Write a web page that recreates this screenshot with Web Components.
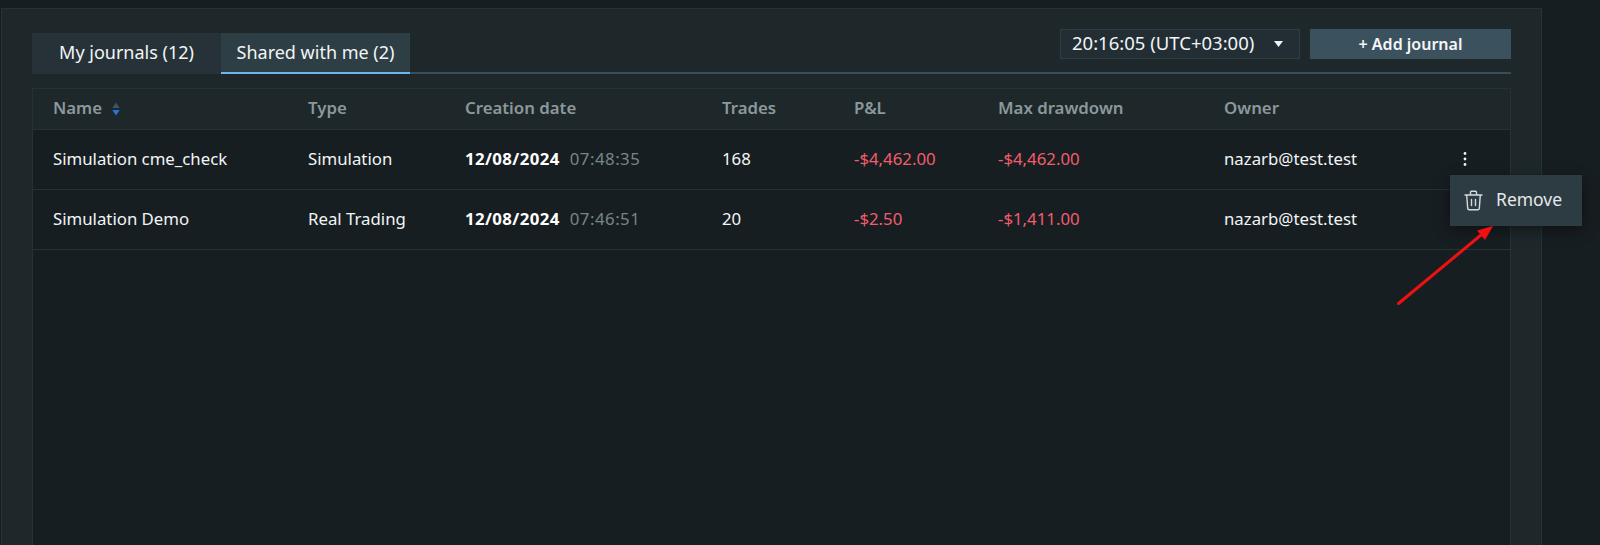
<!DOCTYPE html>
<html>
<head>
<meta charset="utf-8">
<title>Journals</title>
<style>
    html, body {
        margin: 0;
        height: 545px;
        overflow: hidden;
        background: #171e21;
        color: #fff;
        font-family: "Noto Sans", sans-serif;
    }
</style>
</head>
<body>
<journal-page>
    <journal-tab slot="tabs">My journals (12)</journal-tab>
    <journal-tab slot="tabs" active>Shared with me (2)</journal-tab>
    <time-select slot="tools">20:16:05 (UTC+03:00)</time-select>
    <add-button slot="tools">+ Add journal</add-button>
    <journal-table>
        <journal-row name="Simulation cme_check" type="Simulation" date="12/08/2024" time="07:48:35" trades="168" pnl="-$4,462.00" drawdown="-$4,462.00" owner="nazarb@test.test"></journal-row>
        <journal-row name="Simulation Demo" type="Real Trading" date="12/08/2024" time="07:46:51" trades="20" pnl="-$2.50" drawdown="-$1,411.00" owner="nazarb@test.test"></journal-row>
    </journal-table>
    <row-menu slot="overlay"></row-menu>
</journal-page>

<script>
class JournalPage extends HTMLElement {
    constructor() {
        super();
        this.attachShadow({ mode: 'open' });
    }

    connectedCallback() {
        this.shadowRoot.innerHTML = `
            <style>
                :host {
                    display: block;
                    position: relative;
                    box-sizing: border-box;
                    padding: 8px 0 0 1px;
                    height: 545px;
                    overflow: hidden;
                }

                .panel {
                    width: 1541px;
                    height: 537px;
                    box-sizing: border-box;
                    padding: 24px 30px 0 30px;
                    background: #1e282a;
                    border: 1px solid #263235;
                    border-bottom: 0;
                }

                .top {
                    display: flex;
                    justify-content: space-between;
                    height: 39px;
                    border-bottom: 2px solid #35505c;
                    margin-bottom: 14px;
                }

                .tabs {
                    display: flex;
                }

                .tools {
                    display: flex;
                    gap: 10px;
                    margin-top: -4px;
                    height: 30px;
                }
            </style>
            <div class="panel">
                <div class="top">
                    <div class="tabs"><slot name="tabs"></slot></div>
                    <div class="tools"><slot name="tools"></slot></div>
                </div>
                <slot></slot>
            </div>
            <slot name="overlay"></slot>
        `;
    }
}

class JournalTab extends HTMLElement {
    constructor() {
        super();
        this.attachShadow({ mode: 'open' });
    }

    connectedCallback() {
        this.shadowRoot.innerHTML = `
            <style>
                :host {
                    display: block;
                    width: 189px;
                    height: 41px;
                    box-sizing: border-box;
                    background: #263238;
                    font-size: 18px;
                    line-height: 38px;
                    text-align: center;
                    color: #f2f5f6;
                }

                :host([active]) {
                    background: #2d3e45;
                    border-bottom: 2px solid #6fb5ee;
                }
            </style>
            <slot></slot>
        `;
    }
}

class TimeSelect extends HTMLElement {
    constructor() {
        super();
        this.attachShadow({ mode: 'open' });
    }

    connectedCallback() {
        this.shadowRoot.innerHTML = `
            <style>
                :host {
                    display: flex;
                    align-items: center;
                    justify-content: space-between;
                    width: 240px;
                    height: 30px;
                    box-sizing: border-box;
                    padding: 0 16px 3px 11px;
                    background: #222e33;
                    border: 1px solid #2f3e44;
                    font-size: 18.500px;
                    color: #f2f5f6;
                }

                svg {
                    display: block;
                    margin-top: 3px;
                }
            </style>
            <slot></slot>
            <svg width="9" height="6" viewBox="0 0 9 6"><path d="M0 0h9L4.500 6z" fill="#eef2f3"/></svg>
        `;
    }
}

class AddButton extends HTMLElement {
    constructor() {
        super();
        this.attachShadow({ mode: 'open' });
    }

    connectedCallback() {
        this.shadowRoot.innerHTML = `
            <style>
                :host {
                    display: block;
                    width: 201px;
                    height: 30px;
                    background: #3b525e;
                    font-size: 16px;
                    font-weight: 600;
                    line-height: 30px;
                    text-align: center;
                    color: #f4f6f7;
                }
            </style>
            <slot></slot>
        `;
    }
}

class JournalTable extends HTMLElement {
    constructor() {
        super();
        this.attachShadow({ mode: 'open' });
    }

    connectedCallback() {
        this.shadowRoot.innerHTML = `
            <style>
                :host {
                    display: block;
                    height: 470px;
                    box-sizing: border-box;
                    background: #171e21;
                    border: 1px solid #263235;
                    border-bottom: 0;
                }

                .head {
                    display: grid;
                    grid-template-columns: 255px 157px 257px 132px 144px 226px 1fr;
                    align-items: center;
                    height: 37px;
                    padding: 0 0 3px 20px;
                    background: #1e282a;
                    border-bottom: 1px solid #263235;
                    font-size: 16.800px;
                    font-weight: 600;
                    color: #8b989c;
                }

                .name {
                    display: flex;
                    align-items: center;
                    gap: 10px;
                }

                svg {
                    display: block;
                    margin-top: 2px;
                }
            </style>
            <div class="head">
                <div class="name">Name
                    <svg width="8" height="14" viewBox="0 0 8 14"><path d="M4 .5l3.700 5.500h-7.400z" fill="#3f5662"/><path d="M4 13.500l3.700-5.500h-7.400z" fill="#1e7ad6"/></svg>
                </div>
                <div>Type</div>
                <div>Creation date</div>
                <div>Trades</div>
                <div>P&amp;L</div>
                <div>Max drawdown</div>
                <div>Owner</div>
            </div>
            <slot></slot>
        `;
    }
}

class JournalRow extends HTMLElement {
    constructor() {
        super();
        this.attachShadow({ mode: 'open' });
    }

    connectedCallback() {
        const get = (key) => this.getAttribute(key);
        this.shadowRoot.innerHTML = `
            <style>
                :host {
                    display: grid;
                    grid-template-columns: 255px 157px 257px 132px 144px 226px 239px 1fr;
                    align-items: center;
                    height: 60px;
                    box-sizing: border-box;
                    padding: 0 0 2px 20px;
                    border-bottom: 1px solid #263235;
                    font-size: 16.800px;
                    color: #f2f5f6;
                }

                b {
                    font-weight: 700;
                    letter-spacing: 0.4px;
                    color: #fff;
                }

                .time {
                    margin-left: 10px;
                    letter-spacing: 0.5px;
                    color: #76858a;
                }

                .loss {
                    color: #f25c6c;
                }

                svg {
                    display: block;
                }
            </style>
            <div>${get('name')}</div>
            <div>${get('type')}</div>
            <div><b>${get('date')}</b><span class="time">${get('time')}</span></div>
            <div>${get('trades')}</div>
            <div class="loss">${get('pnl')}</div>
            <div class="loss">${get('drawdown')}</div>
            <div>${get('owner')}</div>
            <svg width="4" height="16" viewBox="0 0 4 16" fill="#eef2f3"><circle cx="2" cy="2.500" r="1.400"/><circle cx="2" cy="8" r="1.400"/><circle cx="2" cy="13.500" r="1.400"/></svg>
        `;
    }
}

class RowMenu extends HTMLElement {
    constructor() {
        super();
        this.attachShadow({ mode: 'open' });
    }

    connectedCallback() {
        this.shadowRoot.innerHTML = `
            <style>
                .menu {
                    position: absolute;
                    left: 1450px;
                    top: 175px;
                    width: 132px;
                    height: 51px;
                    display: flex;
                    align-items: center;
                    gap: 13px;
                    box-sizing: border-box;
                    padding: 0 0 1px 14px;
                    background: #2d3c42;
                    box-shadow: 0 4px 14px rgba(0, 0, 0, 0.45);
                    font-size: 17.500px;
                    color: #e4e9ea;
                }

                .menu span {
                    margin-top: -3px;
                }

                .arrow {
                    position: absolute;
                    left: 1390px;
                    top: 220px;
                }

                svg {
                    display: block;
                }
            </style>
            <div class="menu">
                <svg width="19" height="21" viewBox="0 0 19 21" fill="none" stroke="#d4dadb" stroke-width="1.400" stroke-linecap="round" stroke-linejoin="round">
                    <path d="M1 5h17M6.500 5V2.200c0-.6.4-1 1-1h4c.6 0 1 .4 1 1V5M2.700 5l1 13.400c.1.8.7 1.400 1.500 1.400h8.600c.8 0 1.400-.6 1.500-1.400L16.300 5M7.500 9.500v6M11.500 9.500v6"/>
                </svg>
                <span>Remove</span>
            </div>
            <svg class="arrow" width="110" height="90" viewBox="0 0 110 90">
                <path d="M8.500 83.500L91 15" stroke="#f01010" stroke-width="3" stroke-linecap="round"/>
                <path d="M103 6L95 20 87 10.500z" fill="#f01010"/>
            </svg>
        `;
    }
}

customElements.define('journal-page', JournalPage);
customElements.define('journal-tab', JournalTab);
customElements.define('time-select', TimeSelect);
customElements.define('add-button', AddButton);
customElements.define('journal-table', JournalTable);
customElements.define('journal-row', JournalRow);
customElements.define('row-menu', RowMenu);
</script>
</body>
</html>
